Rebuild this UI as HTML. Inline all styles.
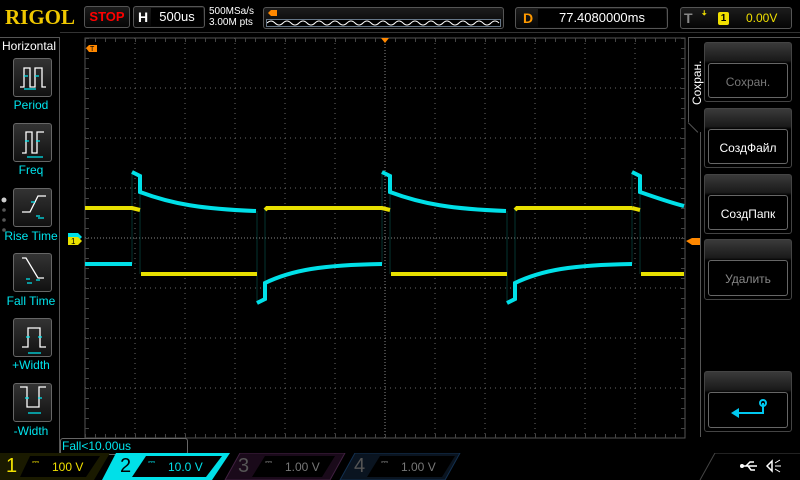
<!DOCTYPE html>
<html><head><meta charset="utf-8"><style>
*{margin:0;padding:0;box-sizing:border-box}
body{width:800px;height:480px;background:#000;position:relative;overflow:hidden;font-family:"Liberation Sans",sans-serif;color:#fff}
.a{position:absolute}
.box{position:absolute;border:1px solid #555;border-radius:3px;background:linear-gradient(#1c1c1c,#050505)}
.btn{position:absolute;left:13px;width:39px;height:39px;border:1px solid #666;border-radius:3px;background:linear-gradient(#333,#111)}
.lbl{position:absolute;left:0;width:62px;text-align:center;color:#00e5ee;font-size:12px}
.rb{position:absolute;left:704px;width:88px;border:1px solid #444;border-radius:3px;background:linear-gradient(#3a3a3a,#1a1a1a 30%,#000 35%)}
.rb .in{position:absolute;left:3px;right:3px;bottom:3px;top:20px;border:1px solid #666;border-radius:3px;background:#000;font-size:12px;text-align:center;line-height:36px}
</style></head><body>
<div class="a" style="left:5px;top:5px;font-family:'Liberation Serif',serif;font-weight:bold;font-size:21px;color:#f0c800">RIGOL</div>
<div class="box" style="left:84px;top:6px;width:46px;height:22px;color:#f00;font-weight:bold;font-size:13px;text-align:center;line-height:20px">STOP</div>
<div class="box" style="left:133px;top:6px;width:72px;height:22px"><span class="a" style="left:4px;top:2px;font-weight:bold;font-size:14px">H</span><div class="a" style="left:17px;top:1px;width:52px;height:18px;background:#000;font-size:13px;text-align:center;line-height:18px">500us</div></div>
<div class="a" style="left:209px;top:6px;font-size:10px;line-height:11px">500MSa/s<br>3.00M pts</div>
<div class="box" style="left:263px;top:7px;width:241px;height:22px"><div class="a" style="left:2px;top:11px;width:235px;height:8px;border:1px solid #678;background:#000"></div>
<svg class="a" style="left:3px;top:11px" width="234" height="8"><path d="M0 4 q4 -4 8 0 t8 0 t8 0 t8 0 t8 0 t8 0 t8 0 t8 0 t8 0 t8 0 t8 0 t8 0 t8 0 t8 0 t8 0 t8 0 t8 0 t8 0 t8 0 t8 0 t8 0 t8 0 t8 0 t8 0 t8 0 t8 0 t8 0 t8 0 t8 0" stroke="#fff" fill="none"/></svg>
<svg class="a" style="left:4px;top:1px" width="10" height="8"><path d="M0 4 L3 1 H9 V7 H3 Z" fill="#f80"/></svg></div>
<div class="box" style="left:515px;top:7px;width:153px;height:22px"><span class="a" style="left:7px;top:2px;color:#f90;font-weight:bold;font-size:14px">D</span><div class="a" style="left:22px;top:1px;width:128px;height:18px;background:#000;font-size:13px;text-align:center;line-height:18px">77.4080000ms</div></div>
<div class="box" style="left:680px;top:7px;width:112px;height:22px"><span class="a" style="left:3px;top:2px;color:#888;font-weight:bold;font-size:14px">T</span><span class="a" style="left:20px;top:2px;color:#f0e000;font-weight:bold;font-size:13px">ꜜ</span><span class="a" style="left:37px;top:4px;width:11px;height:13px;background:#f0e000;color:#000;border-radius:2px;font-size:10px;text-align:center;font-weight:bold;line-height:13px">1</span><span class="a" style="left:65px;top:3px;color:#f0e000;font-size:12px">0.00V</span></div>
<div class="a" style="left:60px;top:32px;width:740px;height:1px;background:#333"></div>
<div class="a" style="left:0;top:37px;width:60px;height:417px;border-right:1px solid #555;border-top:1px solid #555"></div>
<div class="a" style="left:2px;top:39px;font-size:12px">Horizontal</div>
<div class="btn" style="top:58px"></div><div class="lbl" style="top:98px">Period</div>
<div class="btn" style="top:123px"></div><div class="lbl" style="top:163px">Freq</div>
<div class="btn" style="top:188px"></div><div class="lbl" style="top:229px">Rise Time</div>
<div class="btn" style="top:253px"></div><div class="lbl" style="top:294px">Fall Time</div>
<div class="btn" style="top:318px"></div><div class="lbl" style="top:358px">+Width</div>
<div class="btn" style="top:383px"></div><div class="lbl" style="top:424px">-Width</div>
<svg class="a" style="left:0;top:40px" width="62" height="400" fill="none" stroke-width="1.3">
<g stroke="#fff"><path d="M20 47 H24 V28 H30 V47 H35 V28 H42 V47 H46"/><path d="M22 113 H26 V92 H32 V113 H37 V92 H44"/><path d="M22 172 H30 L38 156 H46"/><path d="M22 218 H26 L38 238 H44"/><path d="M22 307 H28 V288 H40 V307 H46"/><path d="M20 347 H27 V367 H39 V347 H46"/></g>
<g stroke="#00e5ee"><path d="M24 36 h4 M35 36 h4 M24 49 H36"/><path d="M25 101 h4 M36 101 h4 M27 117 H43"/><path d="M31 162 h4 M36 176 h4 M38 178 H44"/><path d="M26 239 h4 M36 240 h4 M27 243 H32"/><path d="M26 297 h4 M38 297 h4 M28 313 H41"/><path d="M25 358 h4 M38 358 h4 M28 373 H41"/></g>
<circle cx="4" cy="160" r="2.5" fill="#ccc" stroke="none"/><circle cx="4" cy="170" r="1.8" fill="#555" stroke="none"/><circle cx="4" cy="180" r="1.8" fill="#555" stroke="none"/><circle cx="4" cy="190" r="1.8" fill="#555" stroke="none"/>
</svg>
<svg class="a" style="left:0;top:0" width="800" height="480">
<rect x="85" y="38" width="600" height="400" fill="none" stroke="#555"/>
<g stroke="#666" stroke-dasharray="1 4">
<path d="M135 38V438M185 38V438M235 38V438M285 38V438M335 38V438M435 38V438M485 38V438M535 38V438M585 38V438M635 38V438"/>
<path d="M85 88H685M85 138H685M85 188H685M85 288H685M85 338H685M85 388H685"/>
</g>
<g stroke="#888" stroke-dasharray="1 2"><path d="M385 38V438M85 238H685"/></g>
<g stroke="#444" stroke-dasharray="1 9"><path d="M85 40H685M85 436H685" stroke-width="4"/><path d="M87 38V438M683 38V438" stroke-width="4"/></g>
<g fill="none" stroke-width="1" opacity="0.5"><path d="M132 172V264M140 192V274M257 211V303M265 208V283M382 172V264M390 192V274M507 211V303M515 208V283M632 172V264M640 192V274" stroke="#0a6a60"/></g>
<defs>
<g id="p" fill="none" stroke-width="4">
<path d="M0 208 H47 L55 210" stroke="#e8e000"/>
<path d="M56 274 H172" stroke="#e8e000"/>
<path d="M180 210 L182 208 H297" stroke="#e8e000"/>
<path d="M47 172 L55 176 V192 C87 204 117 209 171 211" stroke="#00e0e8"/>
<path d="M172 303 L180 299 V283 C207 270 237 265 297 264" stroke="#00e0e8"/>
</g>
</defs>
<use href="#p" x="85"/><use href="#p" x="335"/>
<path d="M85 264 H132" stroke="#00e0e8" stroke-width="4"/>
<g fill="none" stroke-width="4"><path d="M632 208 L640 210" stroke="#e8e000"/><path d="M641 274 H684" stroke="#e8e000"/><path d="M632 172 L640 176 V192 C660 199 672 203 684 206" stroke="#00e0e8"/></g>
<path d="M86 48 L89 45 H97 V52 H89 Z" fill="#f80"/><text x="90" y="51" font-size="7" fill="#000" font-family="Liberation Sans">T</text>
<path d="M381 38 H389 L385 43 Z" fill="#f80"/>
<path d="M68 233 H78 L82 237 L78 241 H68 Z" fill="#00e0e8"/><path d="M68 237 H78 L82 241 L78 245 H68 Z" fill="#e8e000"/>
<text x="71" y="244" font-size="8" fill="#000" font-family="Liberation Sans">1</text>
<path d="M686 241 L692 238 H700 V245 H692 Z" fill="#f80"/>
</svg>
<div class="a" style="left:688px;top:37px;width:1px;height:85px;background:#555"></div>
<div class="a" style="left:688px;top:122px;width:14px;height:1px;background:#555;transform:rotate(45deg);transform-origin:left"></div>
<div class="a" style="left:700px;top:132px;width:1px;height:305px;background:#555"></div>
<div class="a" style="left:688px;top:37px;width:112px;height:1px;background:#555"></div>
<div class="a" style="left:690px;top:55px;width:14px;height:50px;font-size:12px;writing-mode:vertical-rl;transform:rotate(180deg);line-height:14px">Сохран.</div>
<div class="rb" style="top:42px;height:60px"><div class="in" style="color:#777">Сохран.</div></div>
<div class="rb" style="top:108px;height:60px"><div class="in">СоздФайл</div></div>
<div class="rb" style="top:174px;height:60px"><div class="in">СоздПапк</div></div>
<div class="rb" style="top:239px;height:61px"><div class="in" style="color:#888">Удалить</div></div>
<div class="rb" style="top:371px;height:61px"><div class="in"></div></div>
<svg class="a" style="left:730px;top:398px" width="40" height="30"><path d="M33 5 V15 H8" stroke="#00c8f0" stroke-width="2" fill="none"/><path d="M1 15 L9 10 V20 Z" fill="#00c8f0"/><circle cx="33" cy="5" r="3" fill="none" stroke="#00c8f0" stroke-width="2"/></svg>
<div class="a" style="left:60px;top:438px;width:128px;height:17px;border:1px solid #666;border-radius:3px;color:#00e5ee;font-size:12px;padding-left:1px;line-height:15px">Fall&lt;10.00us</div>
<svg class="a" style="left:0;top:453px" width="800" height="27">
<path d="M0 0 H110 L94 27 H0 Z" fill="#1a1a00"/>
<path d="M30 3 H100 L86 24 H20 Z" fill="#000"/>
<path d="M116 0 H230 L212 27 H102 Z" fill="#00e0e8"/>
<path d="M146 3 H222 L206 24 H132 Z" fill="#000"/>
<path d="M240 0 H345 L330 27 H225 Z" fill="#1a0a1a" stroke="#402040"/>
<path d="M265 3 H335 L322 24 H252 Z" fill="#000"/>
<path d="M355 0 H460 L445 27 H340 Z" fill="#0a1420" stroke="#123050"/>
<path d="M380 3 H455 L442 24 H367 Z" fill="#000"/>
<path d="M715 0 H800 M715 0 L700 27" stroke="#444" fill="none"/>
</svg>
<div class="a" style="left:6px;top:455px;font-size:20px;color:#f0e000">1</div>
<div class="a" style="left:32px;top:457px;font-size:9px;color:#f0e000">⎓</div>
<div class="a" style="left:52px;top:460px;font-size:12px;color:#f0e000">100 V</div>
<div class="a" style="left:120px;top:455px;font-size:20px;color:#000">2</div>
<div class="a" style="left:148px;top:457px;font-size:9px;color:#00e0e8">⎓</div>
<div class="a" style="left:168px;top:460px;font-size:12px;color:#00e0e8">10.0 V</div>
<div class="a" style="left:238px;top:455px;font-size:20px;color:#555">3</div>
<div class="a" style="left:265px;top:457px;font-size:9px;color:#888">⎓</div>
<div class="a" style="left:285px;top:460px;font-size:12px;color:#777">1.00 V</div>
<div class="a" style="left:354px;top:455px;font-size:20px;color:#555">4</div>
<div class="a" style="left:381px;top:457px;font-size:9px;color:#888">⎓</div>
<div class="a" style="left:401px;top:460px;font-size:12px;color:#777">1.00 V</div>
<svg class="a" style="left:738px;top:456px" width="46" height="20"><path d="M3 10 H19 M8 10 L12 6 H16 M10 10 L13 14 H17" stroke="#fff" stroke-width="1.5" fill="none"/><circle cx="4" cy="10" r="2" fill="#fff"/><path d="M29 10 L34 5 V15 Z M34 5 V15" stroke="#fff" fill="none" stroke-width="1.5"/><path d="M37 7 L42 4 M37 10 H43 M37 13 L42 16" stroke="#fff"/></svg>
</body></html>
